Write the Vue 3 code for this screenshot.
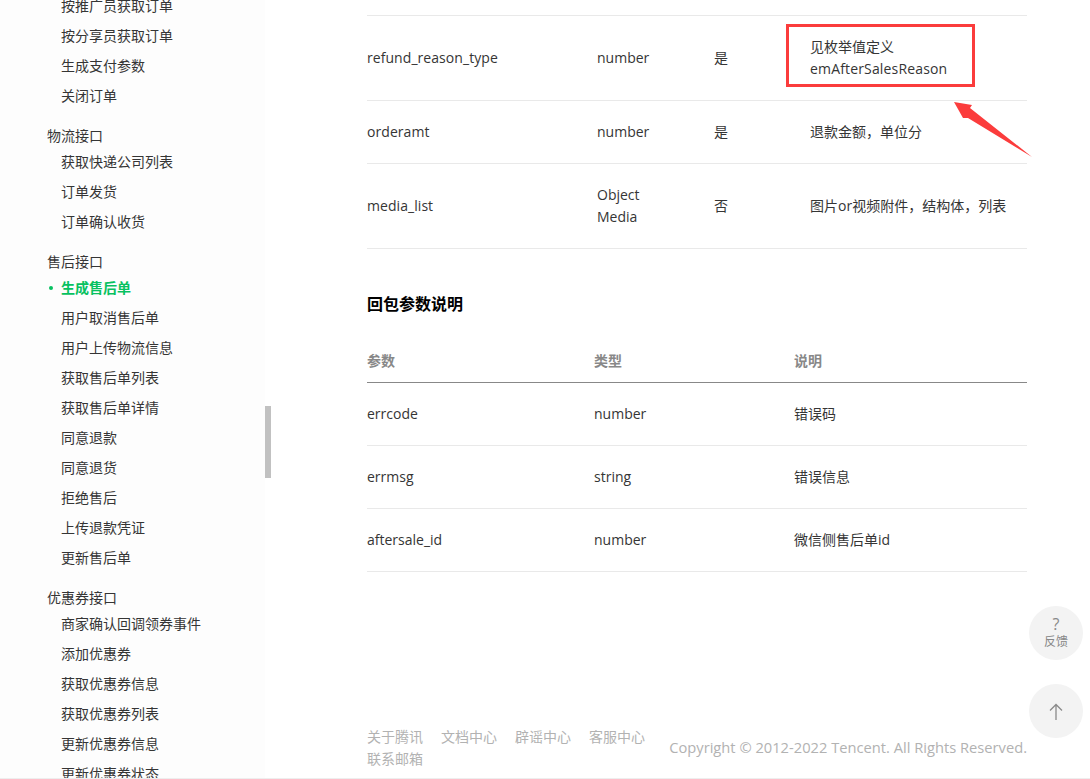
<script setup>
const groups = [
  { title: '', items: ['按推广员获取订单', '按分享员获取订单', '生成支付参数', '关闭订单'] },
  { title: '物流接口', items: ['获取快递公司列表', '订单发货', '订单确认收货'] },
  { title: '售后接口', items: ['生成售后单', '用户取消售后单', '用户上传物流信息', '获取售后单列表', '获取售后单详情', '同意退款', '同意退货', '拒绝售后', '上传退款凭证', '更新售后单'] },
  { title: '优惠券接口', items: ['商家确认回调领券事件', '添加优惠券', '获取优惠券信息', '获取优惠券列表', '更新优惠券信息', '更新优惠券状态'] }
]
const reqRows = [
  { name: 'refund_reason_type', type: ['number'], must: '是', desc: ['见枚举值定义', 'emAfterSalesReason'], h: 85 },
  { name: 'orderamt', type: ['number'], must: '是', desc: ['退款金额，单位分'], h: 63 },
  { name: 'media_list', type: ['Object', 'Media'], must: '否', desc: ['图片or视频附件，结构体，列表'], h: 85 }
]
const resRows = [
  ['errcode', 'number', '错误码'],
  ['errmsg', 'string', '错误信息'],
  ['aftersale_id', 'number', '微信侧售后单id']
]
const links = ['关于腾讯', '文档中心', '辟谣中心', '客服中心', '联系邮箱']
</script>

<template>
  <div class="page">
    <aside class="side">
      <div class="nav">
        <section v-for="(g, i) in groups" :key="i" class="group">
          <div v-if="g.title" class="gtitle">{{ g.title }}</div>
          <div v-for="it in g.items" :key="it" class="item" :class="{ active: it === '生成售后单' }">{{ it }}</div>
        </section>
      </div>
      <div class="thumb"></div>
    </aside>

    <main class="main">
      <div class="table1">
        <div v-for="r in reqRows" :key="r.name" class="row1" :style="{ height: r.h + 'px' }">
          <div class="c1">{{ r.name }}</div>
          <div class="c2"><div v-for="t in r.type" :key="t">{{ t }}</div></div>
          <div class="c3">{{ r.must }}</div>
          <div class="c4"><div v-for="d in r.desc" :key="d" :class="{ latin: d === 'emAfterSalesReason' }">{{ d }}</div></div>
        </div>
      </div>

      <h3 class="heading">回包参数说明</h3>

      <div class="table2">
        <div class="head2">
          <div>参数</div><div>类型</div><div>说明</div>
        </div>
        <div v-for="r in resRows" :key="r[0]" class="row2">
          <div>{{ r[0] }}</div><div>{{ r[1] }}</div><div>{{ r[2] }}</div>
        </div>
      </div>

      <footer class="foot">
        <div class="links"><span v-for="l in links" :key="l" class="link">{{ l }}</span></div>
        <div class="copy">Copyright © 2012-2022 Tencent. All Rights Reserved.</div>
      </footer>

      <div class="redbox"></div>
      <svg class="arrow" width="100" height="75" viewBox="0 0 100 75">
        <polygon points="14,12 32,15 30,18 92,67 28,28 23,28" fill="#fb3c3c" />
      </svg>
    </main>

    <div class="fab fb">
      <span class="q">?</span>
      <span class="fbt">反馈</span>
    </div>
    <div class="fab up">
      <svg width="14" height="17" viewBox="0 0 14 17" fill="none" stroke="#8a8a8a" stroke-width="1.3">
        <path d="M7 17V1.5M1 7.5l6-6 6 6" />
      </svg>
    </div>
    <div class="bottomline"></div>
  </div>
</template>

<style scoped>
.page {
  position: relative;
  display: flex;
  width: 1090px;
  height: 779px;
  overflow: hidden;
  background: #fff;
  font-family: "Open Sans", "Noto Sans CJK SC", sans-serif;
  font-size: 14px;
  color: #353535;
}
.side {
  position: relative;
  flex: none;
  width: 265px;
  height: 779px;
  background: #fdfdfd;
}
.nav {
  padding: 0 0 0 47px;
  margin-top: -9px;
}
.group { margin-bottom: 10px; }
.gtitle {
  height: 30px;
  line-height: 30px;
  margin-bottom: -4px;
}
.item {
  position: relative;
  height: 30px;
  line-height: 30px;
  padding-left: 14px;
}
.item.active {
  color: #07c160;
  font-weight: 700;
}
.item.active::before {
  content: "";
  position: absolute;
  left: 2px;
  top: 13px;
  width: 4px;
  height: 4px;
  border-radius: 50%;
  background: #07c160;
}
.thumb {
  position: absolute;
  left: 265px;
  top: 406px;
  width: 6px;
  height: 72px;
  background: #c1c1c1;
}
.main {
  position: relative;
  flex: none;
  width: 660px;
  margin-left: 102px;
  padding-top: 15px;
}
.table1 { border-top: 1px solid #e9e9e9; }
.row1 {
  display: flex;
  align-items: center;
  box-sizing: border-box;
  border-bottom: 1px solid #e9e9e9;
  line-height: 22px;
}
.c1 { width: 230px; letter-spacing: .06px; }
.c2 { width: 117px; }
.c3 { width: 96px; }
.c4 { flex: 1; }
.latin { letter-spacing: .16px; }
.heading {
  margin: 43px 0 0;
  height: 24px;
  line-height: 24px;
  font-size: 16px;
  font-weight: 700;
  color: #000;
}
.table2 { margin-top: 22px; }
.head2 {
  display: grid;
  grid-template-columns: 227px 200px 1fr;
  align-items: center;
  height: 44px;
  border-bottom: 1px solid #888;
  font-weight: 700;
  color: #888;
}
.row2 {
  display: grid;
  grid-template-columns: 227px 200px 1fr;
  align-items: center;
  height: 63px;
  box-sizing: border-box;
  padding-bottom: 2px;
  border-bottom: 1px solid #e9e9e9;
}
.foot {
  display: flex;
  justify-content: space-between;
  align-items: center;
  margin-top: 154px;
}
.links {
  width: 300px;
  line-height: 22px;
  color: #b2b2b2;
}
.link {
  display: inline-block;
  margin-right: 18px;
}
.copy {
  margin-bottom: 2px;
  font-size: 14.7px;
  color: #b2b2b2;
  white-space: nowrap;
}
.redbox {
  position: absolute;
  left: 419px;
  top: 24px;
  width: 189px;
  height: 63px;
  box-sizing: border-box;
  border: 3px solid #fb3c3c;
}
.arrow {
  position: absolute;
  left: 573px;
  top: 90px;
}
.fab {
  position: absolute;
  left: 1029px;
  width: 54px;
  height: 54px;
  border-radius: 50%;
  background: #f3f3f3;
  display: flex;
  flex-direction: column;
  align-items: center;
  justify-content: center;
  color: #888;
}
.fb { top: 606px; }
.up { top: 684px; }
.q { font-size: 16px; line-height: 18px; }
.fbt { font-size: 12px; line-height: 18px; }
.bottomline {
  position: absolute;
  left: 0;
  right: 0;
  bottom: 0;
  height: 1px;
  background: #eee;
}
</style>
